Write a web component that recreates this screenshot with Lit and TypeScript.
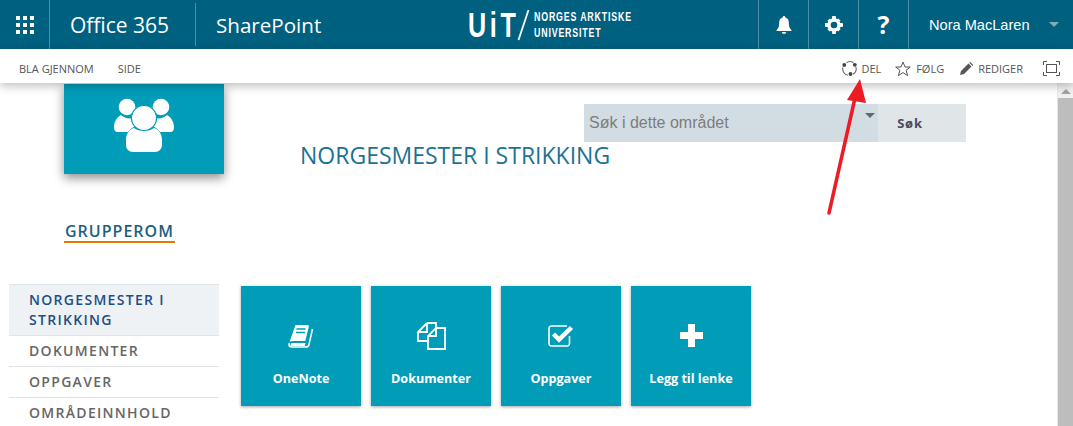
import { LitElement, html, css, svg } from "lit";
import { customElement } from "lit/decorators.js";

const waffle = html`<svg width="18" height="18" viewBox="0 0 18 18" fill="#fff"><path d="M0 0h4v4H0zM7 0h4v4H7zM14 0h4v4h-4zM0 7h4v4H0zM7 7h4v4H7zM14 7h4v4h-4zM0 14h4v4H0zM7 14h4v4H7zM14 14h4v4h-4z"/></svg>`;
const bell = html`<svg width="16" height="18" viewBox="0 0 16 18" fill="#fff"><path d="M8 0a1.3 1.3 0 0 1 1.3 1.4C11.8 2 12.8 4 12.8 6.5c0 4 .9 6 2.7 7.7V15H.5v-.8C2.300 12.500 3.200 10.500 3.200 6.500 3.200 4 4.200 2 6.700 1.400A1.300 1.300 0 0 1 8 0zM5.800 16h4.400A2.300 2.300 0 0 1 8 18a2.300 2.300 0 0 1-2.200-2z"/></svg>`;
const gear = html`<svg width="18" height="18" viewBox="0 0 18 18"><circle cx="9" cy="9" r="5" fill="none" stroke="#fff" stroke-width="3.400"/><path fill="#fff" d="M7.300 0h3.400l.5 3.500H6.800zM7.300 18h3.400l.5-3.500H6.800zM0 7.300v3.400l3.500.5V6.800zM18 7.300v3.400l-3.500.5V6.800zM2.400 4.800l2.400-2.400 2 2.800-2.200 2.200zM15.600 13.200l-2.400 2.400-2-2.800 2.200-2.200zM4.800 15.600l-2.400-2.400 2.800-2 2.200 2.200zM13.200 2.400l2.400 2.400-2.800 2 -2.200-2.200z"/></svg>`;
const share = html`<svg width="15" height="15" viewBox="0 0 15 15" fill="none"><path d="M4.500 1.800A6 6 0 0 1 11.500 1.800M13.800 5.800A6.300 6.300 0 0 1 11 13.200M6 14.200A6.300 6.300 0 0 1 .9 6.500" stroke="#666" stroke-width="1.100"/><circle cx="2.300" cy="4" r="1.900" fill="#444"/><circle cx="12.800" cy="3.800" r="1.900" fill="#444"/><circle cx="8.500" cy="13" r="1.900" fill="#444"/></svg>`;
const star = html`<svg width="16" height="16" viewBox="0 0 16 16" fill="none"><path d="M8 1l2 5h5.300l-4.200 3.300 1.600 5.400L8 11.600l-4.700 3.100 1.600-5.400L.7 6H6z" stroke="#555" stroke-width="1"/></svg>`;
const pencil = html`<svg width="13" height="13" viewBox="0 0 13 13" fill="#555"><path d="M0 13l1-4 7.500-7.500 3 3L4 12zM9.300.7l1-.7 3 3-.7 1z"/></svg>`;
const focus = html`<svg width="17" height="15" viewBox="0 0 17 15" fill="none" stroke="#555" stroke-width="1"><path d="M.5 4V.5H4M13 .5h3.500V4M16.500 11v3.500H13M4 14.500H.5V11"/><rect x="3.500" y="3.500" width="10" height="8"/></svg>`;
const people = html`<svg width="60" height="56" viewBox="0 0 60 56" fill="#fff"><circle cx="13" cy="9" r="8.300"/><circle cx="47" cy="9" r="8.300"/><path d="M7 17c3 3 8 4 11 3 .5 3 2 6 4 8-3 1-6 3-8 6H4c-3 0-4-2-4-5 0-5 3-10 7-12zM53 17c-3 3-8 4-11 3-.5 3-2 6-4 8 3 1 6 3 8 6h10c3 0 4-2 4-5 0-5-3-10-7-12z"/><circle cx="30" cy="20" r="12.500" stroke="#009cb8" stroke-width="1.200"/><path d="M20 30.500c5 4 15 4 20 0 4 1 8 5 8 12v5c0 4-3 7-7 7H19c-4 0-7-3-7-7v-5c0-7 4-11 8-12z" transform="translate(0 -.5)"/></svg>`;
const book = html`<svg width="27" height="24" viewBox="0 0 27 24" fill="none"><path fill="#fff" d="M7.500 1h12c1 0 1.500.7 1.300 1.700L17.300 17H4.200c-1 0-2 .3-2.700 1zM4 19h13.500l-.6 3H4a1.500 1.500 0 0 1 0-3z"/><path stroke="#fff" stroke-width="1.500" d="M24.500 5 21 20.500c-.3 1.500-1.200 2.500-3 2.500H4c-2 0-3-1-3-2.500 0-.5 0-1 .2-1.500"/><path stroke="#009cb8" stroke-width="1.400" d="M8.500 5h9M8 8.500h9"/></svg>`;
const docs = html`<svg width="29" height="28" viewBox="0 0 29 28" fill="none" stroke="#fff" stroke-width="1.800"><path d="M10 1h9v5M10 1 1 10v9h9"/><path d="M10 1v9H1"/><path d="M19 6h9v21H11V14z" fill="#009cb8"/><path d="M19 6v8h-8"/></svg>`;
const check = html`<svg width="27" height="22" viewBox="0 0 27 22" fill="none"><path d="M19 1H3.500A2.500 2.500 0 0 0 1 3.500v15A2.500 2.500 0 0 0 3.500 21H19a2.500 2.500 0 0 0 2.500-2.500V11" stroke="#fff" stroke-width="1.600"/><path d="M5.500 9 11 14.500 23.500 2.500" stroke="#fff" stroke-width="4.500"/></svg>`;
const plus = html`<svg width="23" height="23" viewBox="0 0 23 23" fill="#fff"><path d="M8 0h7v8h8v7h-8v8H8v-8H0V8h8z"/></svg>`;

const arrow = svg`<path d="M829 213 855 98" stroke="#ed1c24" stroke-width="3.500" stroke-linecap="round"/><path d="M847 100 860 79 866 103z" fill="#ed1c24"/>`;

@customElement("app-root")
export class AppRoot extends LitElement {
  static styles = css`
    :host { display: block; width: 1073px; height: 426px; overflow: hidden; position: relative; background: #fff; font-family: "Open Sans", sans-serif; }
    .top { display: flex; height: 49px; background: #00607f; color: #fff; align-items: stretch; }
    .cell { display: flex; align-items: center; justify-content: center; border-left: 1px solid #4d90a5; box-sizing: border-box; }
    .waffle { width: 49px; }
    .o365 { width: 146px; padding-left: 20px; justify-content: flex-start; font-size: 21px; }
    .sp { margin-block: 3px; width: 273px; padding-left: 20px; justify-content: flex-start; font-size: 20.600px; }
    .logo { width: 290px; display: flex; align-items: center; }
    .uit { font-family: "Liberation Sans", sans-serif; font-size: 35px; font-weight: 700; line-height: 35px; width: 50px; letter-spacing: 5px; transform: scaleX(.72); transform-origin: left center; white-space: nowrap; }
    .slash { margin-left: -1px; margin-right: 4px; }
    .logotext { font-family: "Liberation Sans", sans-serif; font-size: 13px; font-weight: 700; line-height: 16px; letter-spacing: 1.200px; transform: scaleX(.68); transform-origin: left center; white-space: nowrap; }
    .ic { width: 50px; }
    .q { font-weight: 700; font-size: 25px; line-height: 25px; }
    .user { width: 165px; justify-content: flex-start; padding-left: 20px; font-family: "Liberation Sans", sans-serif; font-size: 14.600px; gap: 19px; }
    .caret { width: 0; height: 0; border-left: 5px solid transparent; border-right: 5px solid transparent; border-top: 5px solid #8aa9b6; }
    .ribbon { position: relative; z-index: 2; height: 34px; display: flex; align-items: center; font-size: 11px; color: #555; background: #fff; box-shadow: 0 3px 9px rgba(0,0,0,.25); padding: 5px 13px 0 19px; box-sizing: border-box; }
    .ribbon .l { margin-right: 24px; }
    .spacer { flex: 1; }
    .act { display: flex; align-items: center; gap: 5px; margin-right: 14px; }
    .act.del { margin-right: 14px; gap: 5px; letter-spacing: -.1px; }
    .act.fol { margin-right: 16px; gap: 5px; }
    .act.red { margin-right: 20px; }
    .fx { display: flex; }
    .body { display: flex; height: 343px; }
    .page { flex: 1; min-width: 0; }
    .scroll { width: 16px; background: #f1f1f1; display: flex; flex-direction: column; align-items: center; border-left: 1px solid #e8e8e8; box-sizing: border-box; }
    .up { width: 0; height: 0; margin: 6px 0 4px; border-left: 5px solid transparent; border-right: 5px solid transparent; border-bottom: 5px solid #a3a3a3; }
    .thumb { width: 100%; flex: 1; background: #bdbdbd; }
    .head { display: flex; height: 201px; }
    .site { margin-left: 64px; width: 160px; position: relative; }
    .tile { height: 90px; margin-top: 1px; background: #009cb8; display: flex; align-items: center; justify-content: center; box-shadow: 0 4px 10px rgba(0,0,0,.45); }
    .tile svg { margin-top: -6px; }
    .grp { display: inline-block; margin-top: 48px; padding-left: 1px; padding-right: 1px; font-size: 16px; font-weight: 600; line-height: 19px; letter-spacing: 1px; color: #1d5f7f; border-bottom: 2px solid #e07b00; white-space: nowrap; }
    .main { margin-left: 76px; flex: 1; }
    .search { display: flex; margin: 21px 0 0 284px; height: 38px; }
    .inp { position: relative; width: 294px; background: #d2dce3; color: #7d7d7d; font-family: "Liberation Sans", sans-serif; font-size: 16px; line-height: 37px; padding-left: 5px; box-sizing: border-box; }
    .inp i { position: absolute; right: 3px; top: 9px; width: 0; height: 0; border-left: 5px solid transparent; border-right: 5px solid transparent; border-top: 5px solid #666; }
    .btn { width: 88px; background: #e0e5e8; color: #4b4b60; font-weight: 700; font-size: 13px; letter-spacing: .8px; display: flex; align-items: center; justify-content: center; padding-right: 24px; box-sizing: border-box; }
    h1 { margin: 0; font-weight: 400; font-size: 23px; line-height: 26px; color: #1c7293; white-space: nowrap; }
    .lower { display: flex; }
    .nav { margin-left: 9px; width: 210px; }
    .nav div { border-bottom: 1px solid #e1e4e6; font-size: 14px; font-weight: 600; line-height: 20px; letter-spacing: 1.300px; padding: 5px 0 5px 20px; color: #666; }
    .nav .on { color: #1f4e86; background: #eef2f5; border-top: 1px solid #e1e4e6; }
    .nav .nb { border-bottom: 0; }
    .tiles { display: flex; gap: 10px; margin: 2px 0 0 22px; }
    .t { width: 120px; height: 120px; background: #009cb8; color: #fff; display: flex; flex-direction: column; align-items: center; box-shadow: 0 1px 3px rgba(0,0,0,.35); font-size: 12.600px; font-weight: 700; }
    .t .ico { height: 27px; margin-top: 36px; display: flex; align-items: center; justify-content: center; }
    .t .lb { margin-top: 21px; line-height: 18px; }
    .arrow { position: absolute; left: 0; top: 0; pointer-events: none; z-index: 5; }
  `;

  render() {
    return html`
      <div class="top">
        <div class="cell waffle" style="border-left:0">${waffle}</div>
        <div class="cell o365">Office 365</div>
        <div class="cell sp">SharePoint</div>
        <div class="logo">
          <span class="uit">UiT</span>
          <svg class="slash" width="13" height="32" viewBox="0 0 13 32"><path d="M11.500 1 1.500 31" stroke="#fff" stroke-width="1.800"/></svg>
          <div class="logotext">NORGES ARKTISKE<br />UNIVERSITET</div>
        </div>
        <div class="cell ic">${bell}</div>
        <div class="cell ic">${gear}</div>
        <div class="cell ic"><span class="q">?</span></div>
        <div class="cell user">Nora MacLaren <span class="caret"></span></div>
      </div>
      <div class="ribbon">
        <span class="l">BLA GJENNOM</span><span class="l">SIDE</span>
        <span class="spacer"></span>
        <span class="act del">${share} DEL</span>
        <span class="act fol">${star} FØLG</span>
        <span class="act red">${pencil} REDIGER</span>
        <span class="fx">${focus}</span>
      </div>
      <div class="body">
        <div class="page">
          <div class="head">
            <div class="site">
              <div class="tile">${people}</div>
              <div class="grp">GRUPPEROM</div>
            </div>
            <div class="main">
              <div class="search">
                <div class="inp">Søk i dette området<i></i></div>
                <div class="btn">Søk</div>
              </div>
              <h1>NORGESMESTER I STRIKKING</h1>
            </div>
          </div>
          <div class="lower">
            <div class="nav">
              <div class="on">NORGESMESTER I STRIKKING</div>
              <div>DOKUMENTER</div>
              <div>OPPGAVER</div>
              <div class="nb">OMRÅDEINNHOLD</div>
            </div>
            <div class="tiles">
              ${[[book, "OneNote"], [docs, "Dokumenter"], [check, "Oppgaver"], [plus, "Legg til lenke"]].map(
                ([i, l]) => html`<div class="t"><div class="ico">${i}</div><div class="lb">${l}</div></div>`
              )}
            </div>
          </div>
        </div>
        <div class="scroll"><span class="up"></span><span class="thumb"></span></div>
      </div>
      <svg class="arrow" width="1073" height="426" viewBox="0 0 1073 426">${arrow}</svg>
    `;
  }
}
